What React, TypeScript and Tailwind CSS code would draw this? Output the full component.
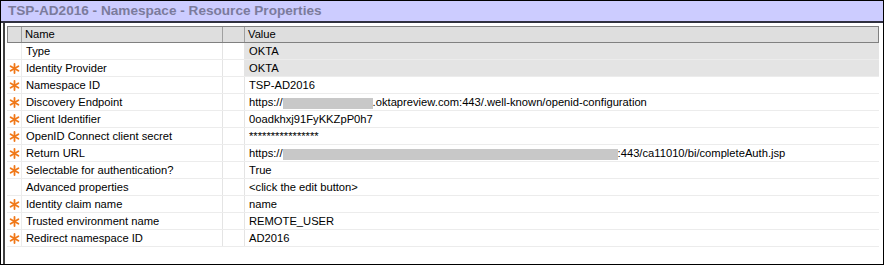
import React from 'react';

interface Row {
  name: string;
  value: React.ReactNode;
  required: boolean;
  shaded?: boolean;
}

const Blur: React.FC<{ w: number }> = ({ w }) => (
  <span className="inline-block h-[11px] align-middle bg-[#c8c8c8]" style={{ width: w }} />
);

const Star: React.FC = () => (
  <svg width="11" height="11" viewBox="0 0 11 11" className="mt-[1px]">
    <g stroke="#f07818" strokeWidth="1.8" strokeLinecap="round">
      <line x1="5.5" y1="1" x2="5.5" y2="10" />
      <line x1="1.6" y1="3.25" x2="9.4" y2="7.75" />
      <line x1="1.6" y1="7.75" x2="9.4" y2="3.25" />
    </g>
  </svg>
);

const rows: Row[] = [
  { name: 'Type', value: 'OKTA', required: false, shaded: true },
  { name: 'Identity Provider', value: 'OKTA', required: true, shaded: true },
  { name: 'Namespace ID', value: 'TSP-AD2016', required: true },
  {
    name: 'Discovery Endpoint',
    value: (
      <>
        https://<Blur w={90} />.oktapreview.com:443/.well-known/openid-configuration
      </>
    ),
    required: true
  },
  { name: 'Client Identifier', value: '0oadkhxj91FyKKZpP0h7', required: true },
  { name: 'OpenID Connect client secret', value: '****************', required: true },
  {
    name: 'Return URL',
    value: (
      <>
        https://<Blur w={335} />:443/ca11010/bi/completeAuth.jsp
      </>
    ),
    required: true
  },
  { name: 'Selectable for authentication?', value: 'True', required: true },
  { name: 'Advanced properties', value: '<click the edit button>', required: false },
  { name: 'Identity claim name', value: 'name', required: true },
  { name: 'Trusted environment name', value: 'REMOTE_USER', required: true },
  { name: 'Redirect namespace ID', value: 'AD2016', required: true }
];

const App: React.FC = () => {
  return (
    <div
      className="w-[884px] h-[265px] bg-white border border-black flex flex-col text-[11.2px] text-black overflow-hidden"
      style={{ fontFamily: '"Liberation Sans", Arial, sans-serif' }}
    >
      <div className="h-[22px] bg-[#ccccff] border-b-2 border-[#303040] flex items-center pl-[7px]">
        <span className="font-bold text-[13.6px] text-[#7b7b9c]">
          TSP-AD2016 - Namespace - Resource Properties
        </span>
      </div>

      <div className="flex-1 ml-[2px] border-l-2 border-[#404040] pl-[2px] pr-[4px] pt-[3px]">
        {/* header */}
        <div className="flex h-[17px] border border-[#808080] bg-[#dedede]">
          <div className="w-[14px] border-r border-[#a0a0a0]" />
          <div className="w-[201px] border-r border-[#a0a0a0] pl-[3px] leading-[15px]">Name</div>
          <div className="w-[22px] border-r border-[#a0a0a0]" />
          <div className="flex-1 pl-[3px] leading-[15px]">Value</div>
        </div>

        {rows.map(row => (
          <div key={row.name} className="flex h-[17px] border-b border-[#ececec]">
            <div className="w-[15px] flex justify-center items-center border-r border-[#ececec]">
              {row.required && <Star />}
            </div>
            <div className="w-[201px] border-r border-[#e4e4e4] pl-[4px] leading-[16px] whitespace-nowrap">
              {row.name}
            </div>
            <div className="w-[22px] border-r border-[#e4e4e4]" />
            <div
              className={
                'flex-1 pl-[4px] leading-[16px] whitespace-nowrap ' +
                (row.shaded ? 'bg-[#e4e4e4]' : 'bg-white')
              }
            >
              {row.value}
            </div>
          </div>
        ))}
      </div>
    </div>
  );
};

export default App;
